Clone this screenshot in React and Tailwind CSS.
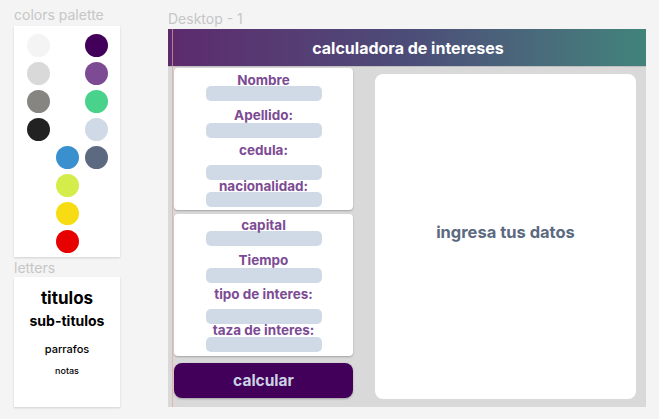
import React from "react";

const font = { fontFamily: "Inter, 'Noto Sans', sans-serif" };

const swatches = [
  { c: "bg-[#f4f4f4]", col: "col-start-1" },
  { c: "bg-[#42005a]", col: "col-start-3" },
  { c: "bg-[#d9d9d9]", col: "col-start-1" },
  { c: "bg-[#7c4b94]", col: "col-start-3" },
  { c: "bg-[#868581]", col: "col-start-1" },
  { c: "bg-[#48d28b]", col: "col-start-3" },
  { c: "bg-[#222222]", col: "col-start-1" },
  { c: "bg-[#cfdae6]", col: "col-start-3" },
  { c: "bg-[#3a8fcf]", col: "col-start-2" },
  { c: "bg-[#5b6a80]", col: "col-start-3" },
  { c: "bg-[#d4ed4a]", col: "col-start-2" },
  { c: "bg-[#f8dc13]", col: "col-start-2" },
  { c: "bg-[#e60000]", col: "col-start-2" },
];

function Label({ children, className = "" }) {
  return (
    <div className={"relative z-10 h-[14px] leading-[14px] text-[13.5px] font-bold text-[#7c4b94] " + className}>
      {children}
    </div>
  );
}

function Input({ className = "" }) {
  return <div className={"w-[116px] h-[15px] rounded-[5px] bg-[#cfdae6] " + className} />;
}

export default function App() {
  return (
    <div className="w-[659px] h-[419px] bg-[#f4f4f4] flex pl-[14px]" style={font}>
      {/* left side: design system */}
      <div className="w-[106px] flex flex-col">
        <div className="mt-[6px] h-[18px] leading-[18px] text-[14px] text-[#c6c6c6]">colors palette</div>
        <div className="mt-[2px] h-[231px] bg-white shadow-[0_1px_2px_rgba(0,0,0,0.15)] grid grid-cols-[29px_29px_29px] auto-rows-[28px] pl-[10px] pt-[5px] content-start">
          {swatches.map((s, i) => (
            <div key={i} className={"flex items-center justify-center " + s.col}>
              <div className={"w-[23px] h-[23px] rounded-full " + s.c} />
            </div>
          ))}
        </div>
        <div className="mt-[2px] h-[18px] leading-[18px] text-[14px] text-[#c6c6c6]">letters</div>
        <div className="h-[130px] bg-white shadow-[0_1px_2px_rgba(0,0,0,0.15)] flex flex-col items-center text-black">
          <div className="mt-[11px] h-[20px] leading-[20px] text-[17px] font-bold">titulos</div>
          <div className="mt-[3px] h-[20px] leading-[20px] text-[14px] font-bold">sub-titulos</div>
          <div className="mt-[11px] h-[14px] leading-[14px] text-[11px] font-medium">parrafos</div>
          <div className="mt-[9px] h-[12px] leading-[12px] text-[9px] font-medium">notas</div>
        </div>
      </div>

      {/* right side: frame */}
      <div className="ml-[48px] w-[478px] flex flex-col">
        <div className="mt-[10px] h-[18px] leading-[18px] text-[14px] text-[#c6c6c6]">Desktop - 1</div>
        <div className="mt-[1px] h-[378px] bg-[#d9d9d9] flex flex-col relative">
          <div className="h-[38px] bg-linear-to-r from-[#5c2a6e] via-[#4c4c78] to-[#41837b] flex items-center justify-center border-b border-[#bfbfbf]">
            <span className="text-white font-bold text-[16px] ml-[2px]">calculadora de intereses</span>
          </div>
          <div className="flex flex-1">
            <div className="ml-[6px] w-[179px] flex flex-col pt-[1px]">
              <div className="h-[142px] bg-white rounded-[4px] shadow-[0_1px_2px_rgba(0,0,0,0.25)] flex flex-col items-center pt-[5px]">
                <Label>Nombre</Label>
                <Input className="-mt-px" />
                <Label className="mt-[7px]">Apellido:</Label>
                <Input className="mt-[1px]" />
                <Label className="mt-[5px]">cedula:</Label>
                <Input className="mt-[8px]" />
                <Label className="-mt-px">nacionalidad:</Label>
                <Input className="-mt-px" />
              </div>
              <div className="mt-[4px] h-[142px] bg-white rounded-[4px] shadow-[0_1px_2px_rgba(0,0,0,0.25)] flex flex-col items-center pt-[4px]">
                <Label>capital</Label>
                <Input className="-mt-px" />
                <Label className="mt-[7px]">Tiempo</Label>
                <Input className="mt-[1px]" />
                <Label className="mt-[4px]">tipo de interes:</Label>
                <Input className="mt-[8px]" />
                <Label className="-mt-px">taza de interes:</Label>
                <Input />
              </div>
              <button className="mt-[7px] h-[35px] rounded-[8px] bg-[#42005a] text-[#cbd3e3] font-bold text-[15.5px] shadow-[0_1px_2px_rgba(0,0,0,0.25)]">
                calcular
              </button>
            </div>
            <div className="ml-[22px] mt-[7px] mb-[8px] w-[261px] bg-white rounded-[8px] flex items-center justify-center">
              <span className="text-[#5b6a80] font-bold text-[16.5px] -mt-[8px]">ingresa tus datos</span>
            </div>
          </div>
          <div className="absolute left-[4px] top-0 bottom-0 w-px bg-[#e8a394]/70" />
        </div>
      </div>
    </div>
  );
}
